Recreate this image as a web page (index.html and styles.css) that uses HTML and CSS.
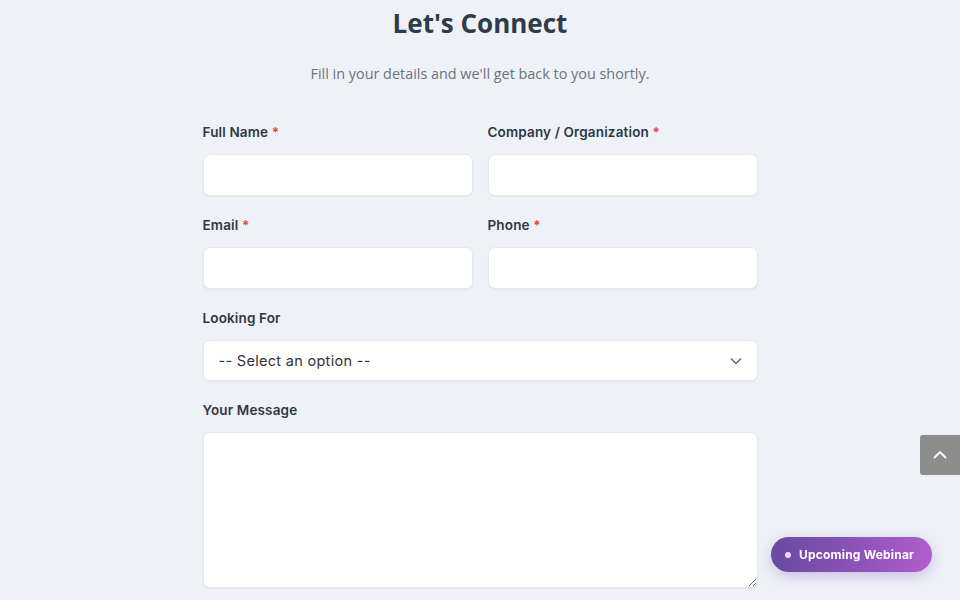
FILE: index.html
```html
<!DOCTYPE html>
<html lang="en">
<head>
<meta charset="utf-8">
<title>Let's Connect</title>
<link rel="stylesheet" href="styles.css">
</head>
<body>
<main class="page">
  <h1 class="title">Let's Connect</h1>
  <p class="subtitle">Fill in your details and we'll get back to you shortly.</p>
  <form class="form">
    <div class="row">
      <div class="field">
        <label class="label">Full Name <span class="req">*</span></label>
        <input class="input" type="text">
      </div>
      <div class="field">
        <label class="label">Company / Organization <span class="req">*</span></label>
        <input class="input" type="text">
      </div>
    </div>
    <div class="row">
      <div class="field">
        <label class="label">Email <span class="req">*</span></label>
        <input class="input" type="email">
      </div>
      <div class="field">
        <label class="label">Phone <span class="req">*</span></label>
        <input class="input" type="tel">
      </div>
    </div>
    <div class="field">
      <label class="label">Looking For</label>
      <div class="select">
        <span>-- Select an option --</span>
        <svg class="chev" width="14" height="14" viewBox="0 0 14 14"><path d="M2 4.5 L7 9.5 L12 4.5" fill="none" stroke="#666" stroke-width="1.4"/></svg>
      </div>
    </div>
    <div class="field">
      <label class="label">Your Message</label>
      <textarea class="textarea"></textarea>
    </div>
  </form>
</main>
<button class="totop" type="button" aria-label="Back to top">
  <svg width="18" height="18" viewBox="0 0 18 18"><path d="M3 12 L9 6 L15 12" fill="none" stroke="#fff" stroke-width="1.8"/></svg>
</button>
<a class="webinar" href="#"><span class="dot"></span>Upcoming Webinar</a>
</body>
</html>
```
FILE: styles.css
```css
* { box-sizing: border-box; }
html, body { margin: 0; padding: 0; }
body {
  background: #eef2f6;
  font-family: "Inter", "Open Sans", sans-serif;
  color: #2d3748;
  height: 600px;
  overflow: hidden;
}
.page {
  width: 555px;
  margin: 0 auto;
  padding-top: 4px;
}
.title {
  margin: 0;
  text-align: center;
  font-family: "Open Sans", sans-serif;
  font-weight: 700;
  font-size: 26px;
  line-height: 38px;
  color: #2f3a4b;
}
.subtitle {
  margin: 22px 0 0;
  text-align: center;
  font-family: "Open Sans", sans-serif;
  font-size: 14.4px;
  line-height: 20px;
  color: #6b7280;
}
.form {
  margin-top: 39px;
  display: flex;
  flex-direction: column;
  gap: 20px;
}
.row {
  display: grid;
  grid-template-columns: 270px 270px;
  gap: 15px;
}
.field {
  display: flex;
  flex-direction: column;
}
.label {
  font-size: 13.5px;
  font-weight: 600;
  letter-spacing: 0.15px;
  line-height: 18px;
  color: #2d3748;
  margin-bottom: 13px;
}
.req { color: #e53e3e; }
.input, .select, .textarea {
  background: #fff;
  border: 1px solid #e3e8ee;
  border-radius: 7px;
  box-shadow: 0 1px 2px rgba(0,0,0,0.05);
  font: inherit;
}
.input { height: 42px; }
.select {
  height: 41px;
  display: flex;
  align-items: center;
  justify-content: space-between;
  padding: 0 14px 0 15px;
  font-size: 14.5px;
  letter-spacing: 0.3px;
  color: #333;
}
.chev { display: block; }
.textarea {
  height: 156px;
  resize: vertical;
}
.totop {
  position: fixed;
  right: 0;
  top: 435px;
  width: 40px;
  height: 40px;
  border: 0;
  border-radius: 3px 0 0 3px;
  background: #8c8c8c;
  display: flex;
  align-items: center;
  justify-content: center;
  padding: 0;
}
.webinar {
  position: fixed;
  left: 771px;
  top: 537px;
  width: 161px;
  height: 35px;
  border-radius: 18px;
  background: linear-gradient(90deg, #6a4aa0 0%, #8a52b8 50%, #b25dcd 100%);
  box-shadow: 0 4px 14px rgba(140, 90, 200, 0.35);
  color: #fff;
  text-decoration: none;
  font-size: 12px;
  font-weight: 700;
  letter-spacing: 0.2px;
  display: flex;
  align-items: center;
  padding-left: 14px;
  gap: 8px;
}
.dot {
  width: 6px;
  height: 6px;
  border-radius: 50%;
  background: #e8dcf2;
}
```
